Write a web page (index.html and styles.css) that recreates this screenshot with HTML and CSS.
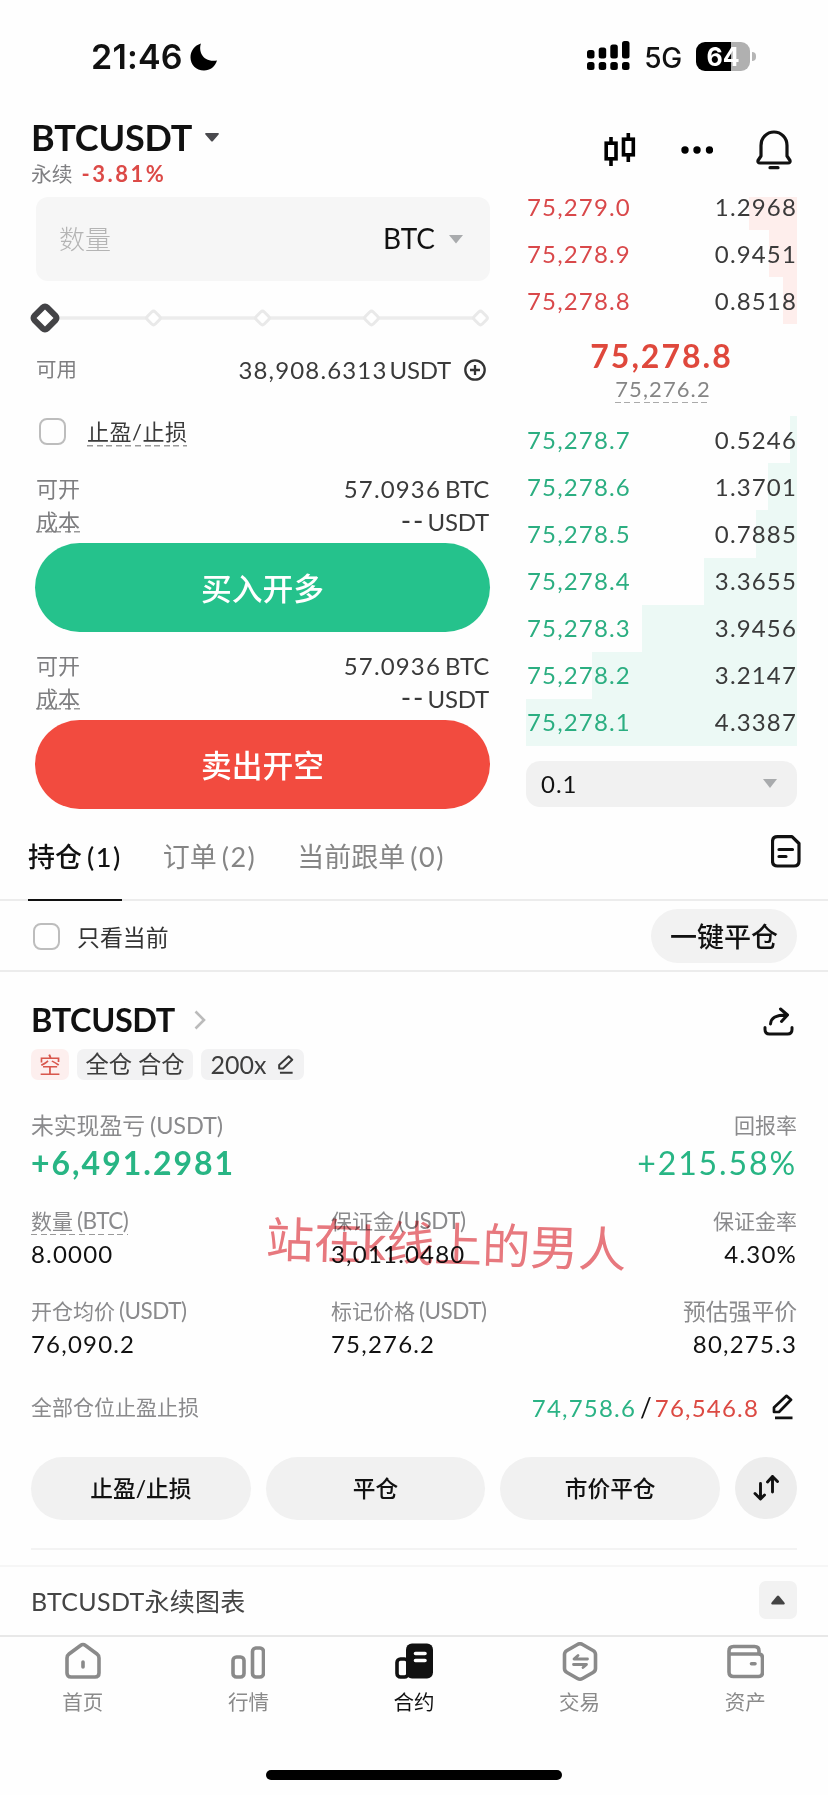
FILE: index.html
```html
<!DOCTYPE html>
<html lang="zh-CN">
<head>
<meta charset="utf-8">
<title>BTCUSDT 永续</title>
<link rel="stylesheet" href="styles.css">
</head>
<body>
<div class="app">
  <header class="status">
    <span class="clock">21:46</span>
    <svg class="moon" width="28" height="28" viewBox="0 0 28 28"><path d="M11 .5C8 8 13 20 27 17.500C25 24 20 27.500 14 27.500C6 27.500 .5 21.500 .5 14.500C.5 8 4.500 2.500 11 .5Z"/></svg>
    <svg class="signal" width="43" height="30" viewBox="0 0 43 30"><rect x="0" y="9" width="7.500" height="8.500" rx="2.500"/><rect x="11.700" y="6.500" width="7.500" height="11" rx="2.500"/><rect x="23.300" y="3.500" width="7.500" height="14" rx="2.500"/><rect x="35" y="0" width="7.500" height="17.500" rx="2.500"/><rect x="0" y="21" width="7.500" height="8" rx="2.500"/><rect x="11.700" y="21" width="7.500" height="8" rx="2.500"/><rect x="23.300" y="21" width="7.500" height="8" rx="2.500"/><rect x="35" y="21" width="7.500" height="8" rx="2.500"/></svg>
    <span class="network">5G</span>
    <span class="battery">64</span><i class="battery-nub"></i>
  </header>

  <section class="pair">
    <div class="pair-info">
      <h1 class="pair-name">BTCUSDT <svg width="14" height="9" viewBox="0 0 14 9"><path d="M1 0h12a.8.8 0 0 1 .6 1.400L8 8a1.400 1.400 0 0 1-2 0L.4 1.400A.8.8 0 0 1 1 0Z" fill="#4a4a4e"/></svg></h1>
      <div class="pair-sub"><span>永续</span><b class="change">-3.81%</b></div>
    </div>
    <div class="pair-tools">
      <svg width="32" height="34" viewBox="0 0 32 34" fill="none" stroke="#000" stroke-width="3.600"><path d="M7 4v6M7 27v6M24.300 0v6M24.300 23v6"/><rect x="2.200" y="10.200" width="9.800" height="15.600"/><rect x="19.500" y="6.200" width="9.800" height="15.600"/></svg>
      <svg class="dots" width="32" height="8" viewBox="0 0 32 8"><circle cx="4" cy="4" r="3.700"/><circle cx="16" cy="4" r="3.700"/><circle cx="28.500" cy="4" r="3.700"/></svg>
      <svg class="bell" width="36" height="40" viewBox="0 0 36 40" fill="none" stroke="#111" stroke-width="3.200" stroke-linecap="round" stroke-linejoin="round"><path d="M5 26V15.500a13 13.500 0 0 1 26 0V26l3 4.500q.6 2.500-2 2.500H4q-2.600 0-2-2.500ZM14 37.700h8"/></svg>
    </div>
  </section>

  <main class="trade">
    <section class="order-form">
      <div class="amount"><span class="amount-hint">数量</span><span class="amount-unit">BTC</span><svg width="14" height="9" viewBox="0 0 14 9"><path d="M0 0h14L7 8.500Z" fill="#a9abad"/></svg></div>
      <svg class="slider" width="460" height="32" viewBox="0 0 460 32" fill="#fff"><path d="M16 16H452" stroke="#ececec" stroke-width="3.600"/><g stroke="#e9e9e9" stroke-width="3"><rect x="119" y="10.500" width="11" height="11" rx="2.500" transform="rotate(45 124.500 16)"/><rect x="228" y="10.500" width="11" height="11" rx="2.500" transform="rotate(45 233.500 16)"/><rect x="337" y="10.500" width="11" height="11" rx="2.500" transform="rotate(45 342.500 16)"/><rect x="446" y="10.500" width="11" height="11" rx="2.500" transform="rotate(45 451.500 16)"/></g><rect x="7" y="7" width="18" height="18" rx="3" transform="rotate(45 16 16)" stroke="#434346" stroke-width="6"/></svg>
      <div class="line available"><span class="small">可用</span><span class="figure">38,908.6313<em>USDT</em></span><svg width="22" height="22" viewBox="0 0 22 22" fill="none" stroke="#333" stroke-width="2.300"><circle cx="11" cy="11" r="9.700"/><path d="M11 6v10M6 11h10"/></svg></div>
      <label class="tpsl"><i class="check"></i><span class="dash dark">止盈/止损</span></label>
      <div class="line"><span>可开</span><span class="figure">57.0936<em>BTC</em></span></div>
      <div class="line"><span class="dash-tight">成本</span><span class="figure none">--<em>USDT</em></span></div>
      <button class="action buy">买入开多</button>
      <div class="line"><span>可开</span><span class="figure">57.0936<em>BTC</em></span></div>
      <div class="line"><span class="dash-tight">成本</span><span class="figure none">--<em>USDT</em></span></div>
      <button class="action sell">卖出开空</button>
    </section>

    <section class="book">
      <div class="asks">
        <div class="level ask first"><i style="width:48px"></i><span>75,279.0</span><b>1.2968</b></div>
        <div class="level ask"><i style="width:28px"></i><span>75,278.9</span><b>0.9451</b></div>
        <div class="level ask"><i style="width:14px"></i><span>75,278.8</span><b>0.8518</b></div>
      </div>
      <div class="last">75,278.8</div>
      <div class="mark"><span>75,276.2</span></div>
      <div class="bids">
        <div class="level bid"><i style="width:7px"></i><span>75,278.7</span><b>0.5246</b></div>
        <div class="level bid"><i style="width:29px"></i><span>75,278.6</span><b>1.3701</b></div>
        <div class="level bid"><i style="width:41px"></i><span>75,278.5</span><b>0.7885</b></div>
        <div class="level bid"><i style="width:93px"></i><span>75,278.4</span><b>3.3655</b></div>
        <div class="level bid"><i style="width:155px"></i><span>75,278.3</span><b>3.9456</b></div>
        <div class="level bid"><i style="width:205px"></i><span>75,278.2</span><b>3.2147</b></div>
        <div class="level bid"><i style="width:271px"></i><span>75,278.1</span><b>4.3387</b></div>
      </div>
      <div class="step"><span>0.1</span><svg width="14" height="9" viewBox="0 0 14 9"><path d="M0 0h14L7 9Z" fill="#a9abad"/></svg></div>
    </section>
  </main>

  <nav class="tabs">
    <span class="tab active">持仓<em>(1)</em></span>
    <span class="tab">订单<em>(2)</em></span>
    <span class="tab">当前跟单<em>(0)</em></span>
    <svg class="doc" width="30" height="33" viewBox="0 0 30 33" fill="none" stroke="#111" stroke-width="3.200" stroke-linecap="round" stroke-linejoin="round"><path d="M6.500 1.700H21L28 8.500V26q0 5-5 5H6.500q-5 0-5-5V6.700q0-5 5-5ZM8 14.500h13.500M8 21.500h7"/></svg>
  </nav>

  <div class="filter">
    <i class="check"></i><span class="filter-text">只看当前</span><button class="close-all">一键平仓</button>
  </div>

  <article class="position">
    <div class="position-head">
      <h2 class="position-name">BTCUSDT</h2>
      <svg class="chevron" width="12" height="20" viewBox="0 0 12 20" fill="none" stroke="#bbb" stroke-width="2.600"><path d="M1.500 1.500 10 10l-8.500 8.500"/></svg>
      <svg class="share" width="31" height="30" viewBox="0 0 31 30" fill="none" stroke="#111" stroke-width="3" stroke-linecap="round" stroke-linejoin="round"><path d="M2 20.500v2q0 4.500 4.500 4.500h18q4.500 0 4.500-4.500v-2M7.500 17C8 11 12 8 24 8M17.500 2l7 6-6 6.500"/></svg>
    </div>
    <div class="tags">
      <span class="tag short">空</span><span class="tag mode">全仓 合仓</span><span class="tag lever">200x<svg width="17" height="19" viewBox="0 0 20 24" fill="none" stroke="#3a3a3a" stroke-width="2.500" stroke-linejoin="round"><path d="M2 17v-4.500L14 1.500l4.500 4.500L7 17ZM3 22.500h16"/></svg></span>
    </div>
    <div class="pnl">
      <div><div class="label big">未实现盈亏<em>(USDT)</em></div><div class="gain strong">+6,491.2981</div></div>
      <div class="right"><div class="label">回报率</div><div class="gain">+215.58%</div></div>
    </div>
    <div class="stats">
      <div><div class="label"><span class="dash">数量<em>(BTC)</em></span></div><div class="value">8.0000</div></div>
      <div><div class="label">保证金<em>(USDT)</em></div><div class="value">3,011.0480</div></div>
      <div class="right"><div class="label">保证金率</div><div class="value">4.30%</div></div>
      <div><div class="label">开仓均价<em>(USDT)</em></div><div class="value">76,090.2</div></div>
      <div><div class="label">标记价格<em>(USDT)</em></div><div class="value">75,276.2</div></div>
      <div class="right"><div class="label big">预估强平价</div><div class="value">80,275.3</div></div>
      <div class="watermark">站在k线上的男人</div>
    </div>
    <div class="limits">
      <span class="label">全部仓位止盈止损</span>
      <span class="limit up">74,758.6</span><span class="slash">/</span><span class="limit down">76,546.8</span>
      <svg width="21" height="26" viewBox="0 0 21 26" fill="none" stroke="#111" stroke-width="2.700" stroke-linejoin="round"><path d="M2 18v-4.500L14.500 1.800l4.500 4L7 18ZM3 23.800h17.500"/></svg>
    </div>
    <div class="actions">
      <button class="pill">止盈/止损</button><button class="pill">平仓</button><button class="pill">市价平仓</button>
      <button class="swap"><svg width="28" height="28" viewBox="0 0 28 28" fill="none" stroke="#111" stroke-width="2.900" stroke-linecap="round" stroke-linejoin="round"><path d="M8.500 9.500v15.500M3 19.500l5.500 5.500 4-4M20.500 18V2.500M15.500 8l5-5.500 5 5"/></svg></button>
    </div>
  </article>

  <div class="chart"><span>BTCUSDT永续图表</span><i class="expand"><svg width="14" height="10" viewBox="0 0 14 10"><path d="M1 9.500Q-.5 9 .8 7.300L6 1Q7 0 8 1l5.200 6.300Q14.500 9 13 9.500Z" fill="#444"/></svg></i></div>

  <footer class="nav">
    <a class="nav-item"><svg width="36" height="40" viewBox="0 0 36 40"><path d="M2 16q0-2.500 2-4L15.500 3.500q2.500-2 5 0L32 12q2 1.500 2 4V31q0 4-4 4H6q-4 0-4-4ZM18 20v5"/></svg>首页</a>
    <a class="nav-item"><svg width="34" height="40" viewBox="0 0 34 40"><rect x="2" y="15" width="11" height="20" rx="3.500"/><rect x="21.500" y="6" width="11" height="29" rx="3.500"/></svg>行情</a>
    <a class="nav-item current"><svg width="38" height="40" viewBox="0 0 38 40"><rect x="2" y="17" width="11" height="18" rx="3.500"/><rect x="11" y="1.500" width="27" height="35" rx="6" fill="#111" stroke="none"/><path d="M20.500 11.500H30M20.500 18.500H30" stroke="#fff"/></svg>合约</a>
    <a class="nav-item"><svg width="36" height="40" viewBox="0 0 36 40"><path d="M15.500 2.500q2.500-1.500 5 0L31 8.500q2.500 1.500 2.500 4v14q0 2.500-2.500 4l-10.500 6q-2.500 1.500-5 0l-10.500-6q-2.500-1.500-2.500-4v-14q0-2.500 2.500-4Z"/><path d="M25.500 17H12l4-3.500M11.500 22.500h13l-3.500 3" stroke-width="2.800"/></svg>交易</a>
    <a class="nav-item"><svg width="38" height="40" viewBox="0 0 38 40"><path d="M3 12V9q0-4.500 4.500-4.500h21q4.500 0 4.500 4.500v3M3 12h29.500q4 0 4 4v14.500q0 4-4 4h-25Q3 34.500 3 30Z"/><path d="M25.500 21.800h3.500"/></svg>资产</a>
  </footer>
  <div class="home-bar"></div>
</div>
</body>
</html>
```
FILE: styles.css
```css
* { box-sizing: border-box; }
body { margin: 0; background: #fff; }
.app {
  width: 828px; height: 1795px; overflow: hidden;
  display: flex; flex-direction: column;
  background: #fefefe; color: #111;
  font-family: Lato, "Noto Sans CJK SC", sans-serif; font-size: 22px;
}
h1, h2 { margin: 0; }
em, i { font-style: normal; }
svg { display: block; flex: none; }
button { border: 0; padding: 0; font: inherit; color: inherit; }
.right { text-align: right; }

/* Status bar */
.status { height: 112px; display: flex; align-items: center; padding: 0 72px 0 91px; font-family: Inter, sans-serif; }
.clock { font-size: 34px; font-weight: 600; width: 100px; letter-spacing: .2px; }
.moon { margin-top: 1px; }
.signal { margin-left: 369px; }
.network { font-size: 28px; font-weight: 500; margin: 4px 0 0 14px; width: 52px; letter-spacing: -.5px; }
.battery {
  width: 54px; height: 29px; flex: none; border-radius: 9px; color: #fff;
  background: linear-gradient(90deg, #000 64%, #b0b0b0 64%);
  font-size: 25px; font-weight: 700; line-height: 30px; text-align: center;
}
.battery-nub { width: 4px; height: 9px; flex: none; border-radius: 0 4px 4px 0; background: #b5b5b5; margin-left: 2px; }

/* Pair header */
.pair { height: 85px; flex: none; display: flex; justify-content: space-between; padding: 0 36px 0 31px; }
.pair-name { display: flex; align-items: center; gap: 13px; font-size: 36px; line-height: 40px; margin-top: 5px; letter-spacing: -.2px; }
.pair-sub { display: flex; align-items: center; gap: 9px; margin-top: 5px; font-size: 20.800px; line-height: 24px; color: #808083; }
.change { color: #dc4a47; font-size: 22px; letter-spacing: 2.500px; }
.pair-tools { display: flex; align-items: center; height: 76px; }
.dots { margin-left: 45px; }
.bell { margin-left: 43px; }

/* Trade area */
.trade { height: 622px; flex: none; display: flex; gap: 36px; padding: 0 31px 0 35px; }
.order-form { width: 455px; display: flex; flex-direction: column; color: #7e7e80; }
.amount { height: 84px; margin-left: 1px; padding: 0 27px 0 23px; border-radius: 12px; background: #f6f6f6; display: flex; align-items: center; }
.amount-hint { flex: 1; font-size: 26px; color: #b4b4b4; font-weight: 300; margin-top: -4px; }
.amount-unit { font-size: 28px; color: #111; margin: -3px 14px 0 0; letter-spacing: 0; }
.slider { margin: 21px 0 0 -6px; }
.line { height: 33px; flex: none; display: flex; align-items: center; justify-content: space-between; line-height: 33px; padding: 0 1px; }
.figure { font-size: 24px; color: #3a3a3a; letter-spacing: 1.150px; }
.figure em { letter-spacing: -.2px; margin-left: 4px; font-size: 24px; }
.figure.none { letter-spacing: 2px; font-size: 28px; margin-top: -1px; }
.figure.none em { margin-left: 2px; }
.available { margin-top: 19px; padding-right: 4px; }
.available .small { font-size: 20.500px; flex: 1; }
.available .figure { margin-right: 13px; }
.available em { margin-left: 2px; }
.tpsl { height: 33px; display: flex; align-items: center; gap: 21px; margin: 29px 0 24px 4px; }
.check { width: 27px; height: 27px; flex: none; border: 2px solid #bdbdbd; border-radius: 8px; }
.dash { background: repeating-linear-gradient(90deg, #999 0 6px, transparent 6px 9.600px) bottom / 100% 1.500px no-repeat; }
.dash.dark { color: #3a3a3a; line-height: 30px; letter-spacing: .5px; }
.dash-tight { line-height: 22px; background: repeating-linear-gradient(90deg, #999 0 6px, transparent 6px 9.600px) bottom / 100% 1.500px no-repeat; }
.action { height: 89px; flex: none; border-radius: 45px; color: #fff; font-size: 30.800px; font-weight: 500; line-height: 91px; margin: 5px 0 17px; }
.buy { background: #25c28c; }
.sell { background: #f24b3f; margin-bottom: 0; }

/* Order book */
.book { width: 271px; }
.asks { margin-top: -14px; }
.level { position: relative; height: 47.100px; display: flex; align-items: center; justify-content: space-between; padding: 0 0 1px 1px; font-size: 24px; letter-spacing: 1.150px; }
.level i { position: absolute; z-index: 0; right: 0; top: 0; bottom: 0; }
.level.first i { top: 14px; }
.level span, .level b { position: relative; font-weight: 400; }
.level b { color: #3a3a3a; }
.ask span { color: #d9484a; }
.ask i { background: #feeeec; }
.bid span { color: #2bae81; }
.bid i { background: #ecf9f5; }
.last { text-align: center; font-size: 32px; font-weight: 700; line-height: 36px; color: #df483c; margin-top: 14px; letter-spacing: 2px; }
.mark { display: flex; justify-content: center; padding-left: 3px; font-size: 22px; line-height: 29px; color: #858585; letter-spacing: 1.100px; }
.mark span { background: repeating-linear-gradient(90deg, #aaa 0 6px, transparent 6px 9.600px) bottom / 100% 1.500px no-repeat; }
.bids { margin-top: 13px; }
.step { height: 46px; margin-top: 15px; border-radius: 14px; background: #f1f1f1; display: flex; align-items: center; justify-content: space-between; padding: 0 20px 0 15px; font-size: 24px; letter-spacing: 1px; }

/* Tabs */
.tabs { height: 82px; flex: none; display: flex; padding: 0 27px 0 28px; gap: 41px; border-bottom: 2px solid #ececec; line-height: 76px; font-size: 27px; color: #858585; }
.tab { height: 82px; }
.tab em { margin-left: 5px; letter-spacing: 1.500px; }
.tab.active { color: #111; font-weight: 500; border-bottom: 2px solid #111; }
.doc { margin: 16px 0 0 auto; }

/* Filter */
.filter { height: 71px; flex: none; display: flex; align-items: center; padding: 1px 31px 0 33px; border-bottom: 2px solid #ececec; }
.filter-text { flex: 1; margin-left: 17px; font-size: 22.900px; color: #333; }
.close-all { width: 146px; height: 54px; border-radius: 27px; background: #f2f2f2; font-size: 27px; font-weight: 500; line-height: 56px; }

/* Position */
.position { height: 578px; flex: none; margin: 0 31px; border-bottom: 2px solid #f3f3f3; }
.position-head { display: flex; align-items: center; height: 40px; margin-top: 28px; padding-right: 3px; }
.position-name { font-size: 32.500px; line-height: 40px; width: 163px; letter-spacing: -.4px; }
.share { margin: 4px 0 0 auto; }
.tags { display: flex; gap: 8px; margin-top: 9px; height: 33px; color: #3d3d3d; }
.tag { height: 31px; line-height: 31px; border-radius: 7px; background: #f2f2f3; text-align: center; }
.short { width: 38px; color: #d8574c; background: #fdefee; }
.mode { width: 116px; font-size: 23.300px; }
.lever { width: 103px; font-size: 25px; display: flex; gap: 11px; align-items: center; justify-content: center; }
.label { font-size: 21px; line-height: 30px; color: #8a8a8c; font-weight: 400; }
.label.big { font-size: 22.800px; }
.label em { margin-left: 4px; font-size: 22.500px; letter-spacing: -.5px; }
.label.big em { font-size: 23.500px; letter-spacing: -.1px; margin-left: 5px; }
.pnl { display: flex; justify-content: space-between; margin-top: 28px; }
.gain { font-size: 32px; line-height: 38px; margin-top: 4px; color: #28b584; letter-spacing: 1.900px; }
.gain.strong { font-weight: 700; letter-spacing: 2px; }
.stats { position: relative; display: grid; grid-template-columns: 300px 1fr 200px; row-gap: 27px; margin-top: 24px; }
.stats .dash { display: inline-block; line-height: 28px; }
.value { font-size: 24px; line-height: 30px; margin-top: 3px; letter-spacing: 1.200px; }
.watermark { position: absolute; left: 235px; top: 6px; font-size: 48px; line-height: 64px; white-space: nowrap; color: #e8787e; mix-blend-mode: multiply; transform: rotate(1.700deg); }
.limits { display: flex; align-items: center; height: 32px; margin-top: 32px; padding: 0 4px 0 0; }
.limits .label { flex: 1; }
.limit { font-size: 24px; letter-spacing: 1.200px; }
.up { color: #2bb385; }
.down { color: #dc4a43; }
.slash { font-size: 26px; margin: 0 3px 0 4px; }
.limits svg { margin-left: 13px; }
.actions { display: flex; gap: 15px; margin: 34px 0 0; }
.pill { flex: 1; height: 63px; border-radius: 32px; background: #f1f1f1; font-size: 22.700px; font-weight: 500; line-height: 64px; }
.swap { width: 62px; height: 62px; border-radius: 50%; background: #ededed; display: grid; place-items: center; }

/* Chart strip */
.chart { height: 72px; flex: none; margin-top: 15px; border-top: 2px solid #f6f6f6; border-bottom: 2px solid #e8e8e8; display: flex; align-items: center; justify-content: space-between; padding: 0 31px 2px 31px; font-size: 25px; letter-spacing: .3px; color: #444; }
.expand { width: 38px; height: 38px; border-radius: 7px; background: #f2f2f2; display: grid; place-items: center; }

/* Bottom navigation */
.nav { display: flex; flex: none; height: 133px; padding-top: 5px; }
.nav-item { flex: 1; display: flex; flex-direction: column; align-items: center; font-size: 20.500px; line-height: 36px; color: #8a8a8a; }
.nav-item svg { margin-bottom: 2px; fill: none; stroke: #8a8a8a; stroke-width: 3.600; stroke-linecap: round; stroke-linejoin: round; }
.current { color: #111; }
.current svg { stroke: #111; }
.home-bar { width: 296px; height: 10px; flex: none; margin: 0 auto; border-radius: 5px; background: #000; }
```
